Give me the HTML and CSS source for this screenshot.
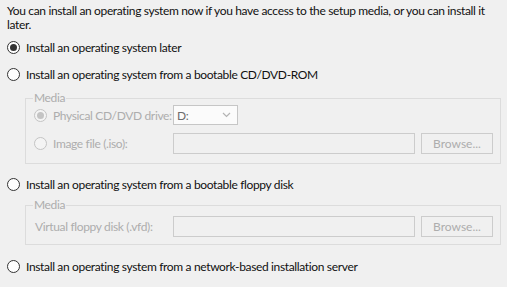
FILE: index.html
```html
<!DOCTYPE html>
<html lang="en">
<head>
    <meta charset="utf-8">
    <title>Guest Operating System Installation</title>
    <link rel="stylesheet" href="styles.css">
</head>
<body>
    <div class="page">
        <p class="intro">You can install an operating system now if you have access to the setup media, or you can install it later.</p>

        <label class="opt"><span class="radio checked"></span>Install an operating system later</label>
        <label class="opt"><span class="radio"></span>Install an operating system from a bootable CD/DVD-ROM</label>

        <fieldset class="media cd">
            <legend>Media</legend>
            <div class="row first">
                <label class="sub"><span class="radio checked off"></span>Physical CD/DVD drive:</label>
                <div class="combo">D:<svg width="9" height="6" viewBox="0 0 9 6"><path d="M1 1l3.5 3.5L8 1" fill="none" stroke="#b4b4b4" stroke-width="1.2"/></svg></div>
            </div>
            <div class="row">
                <label class="sub"><span class="radio off"></span>Image file (.iso):</label>
                <div class="field"></div>
                <button class="browse" disabled>Browse...</button>
            </div>
        </fieldset>

        <label class="opt floppy"><span class="radio"></span>Install an operating system from a bootable floppy disk</label>

        <fieldset class="media fd">
            <legend>Media</legend>
            <div class="row">
                <span class="sub plain">Virtual floppy disk (.vfd):</span>
                <div class="field"></div>
                <button class="browse" disabled>Browse...</button>
            </div>
        </fieldset>

        <label class="opt net"><span class="radio"></span>Install an operating system from a network-based installation server</label>
    </div>
</body>
</html>
```

FILE: styles.css
```css
html, body {
    margin: 0;
    background-color: #f0f0f0;
}

.page {
    display: flex;
    flex-direction: column;
    padding: 4px 9px 0 7px;
    font-family: Lato, "Liberation Sans", sans-serif;
    font-size: 12px;
    letter-spacing: -0.35px;
    color: #111;
}

.intro {
    margin: 0;
    line-height: 14px;
    width: 484px;
}

.opt {
    display: flex;
    align-items: center;
    height: 20px;
    margin-top: 7px;
}

.opt:first-of-type {
    margin-top: 5px;
}

.opt.floppy {
    margin-top: 10px;
}

.opt.net {
    margin-top: 11px;
}

.radio {
    box-sizing: border-box;
    width: 13px;
    height: 13px;
    border: 1px solid #333;
    border-radius: 50%;
    background: #fff;
    margin-right: 6px;
    display: flex;
    align-items: center;
    justify-content: center;
    flex: none;
}

.radio.checked::after {
    content: "";
    width: 7px;
    height: 7px;
    border-radius: 50%;
    background: #333;
}

.radio.off {
    border-color: #c4c4c4;
    background: #f4f4f4;
}

.radio.off.checked::after {
    background: #c4c4c4;
}

/* group boxes */
.media {
    margin: 7px 0 0 18px;
    padding: 0 7px 9px 7px;
    border: 1px solid #dcdcdc;
    color: #adadad;
}

.media.fd {
    margin-top: 4px;
    padding-bottom: 7px;
}

.media legend {
    padding: 0 1px;
    line-height: 14px;
}

.row {
    display: flex;
    align-items: center;
    height: 21px;
    margin-top: 8px;
}

.row.first {
    margin-top: 0;
    height: 20px;
}

.fd .row {
    margin-top: 4px;
}

.sub {
    display: flex;
    align-items: center;
    width: 139px;
    padding-left: 1px;
    white-space: nowrap;
}

.sub.plain {
    padding-left: 2px;
    width: 138px;
}

.combo {
    box-sizing: border-box;
    width: 65px;
    height: 20px;
    border: 1px solid #c6c6c6;
    background: #fbfbfb;
    color: #6d6d6d;
    display: flex;
    align-items: center;
    justify-content: space-between;
    padding: 0 6px 0 3px;
}

.field {
    box-sizing: border-box;
    width: 242px;
    height: 21px;
    border: 1px solid #cccccc;
    background: #f0f0f0;
}

.browse {
    box-sizing: border-box;
    width: 72px;
    height: 21px;
    margin-left: 6px;
    border: 1px solid #cccccc;
    background: #f0f0f0;
    color: #adadad;
    font-family: inherit;
    font-size: 12px;
    letter-spacing: 0;
    padding: 0;
}
```
